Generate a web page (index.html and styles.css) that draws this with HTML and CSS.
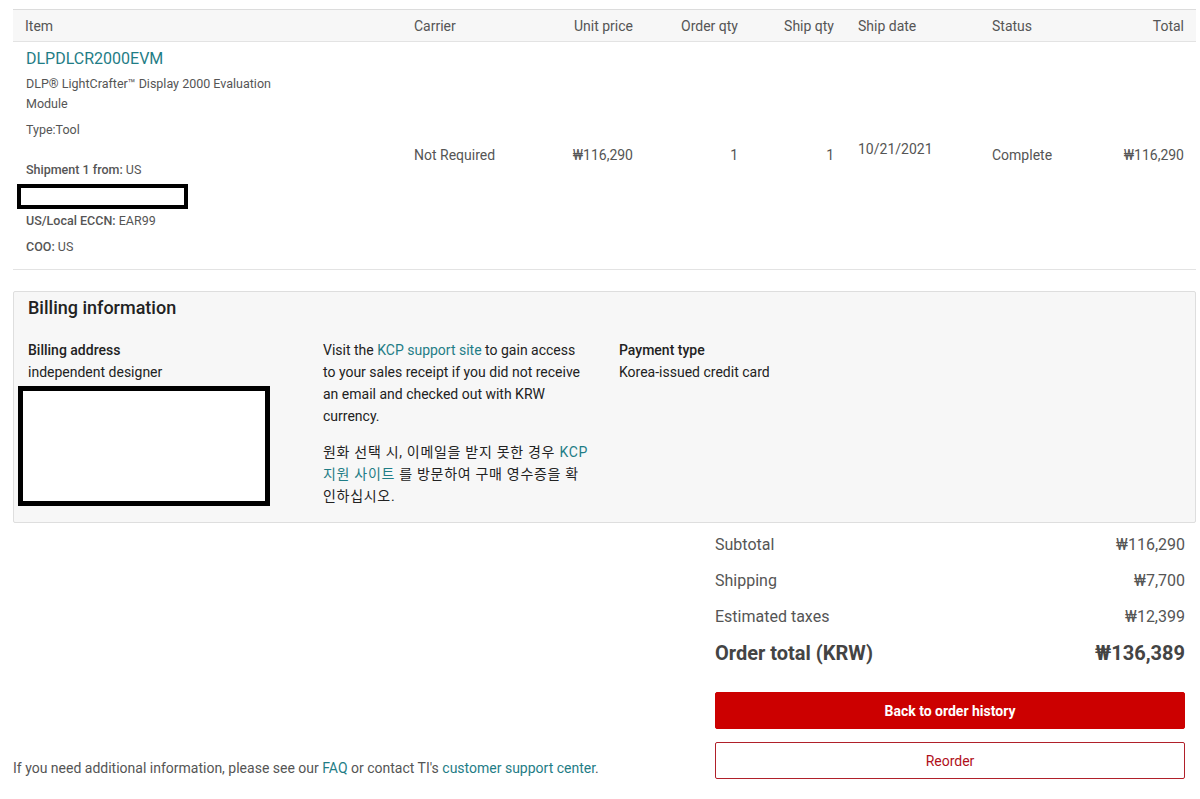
FILE: index.html
```html
<!DOCTYPE html>
<html>
<head>
<meta charset="utf-8">
<link rel="stylesheet" href="styles.css">
</head>
<body>
<div class="page">
  <table class="items">
    <colgroup>
      <col class="c-item"><col class="c-carrier"><col class="c-price"><col class="c-oqty"><col class="c-sqty"><col class="c-date"><col class="c-status"><col class="c-total">
    </colgroup>
    <thead>
      <tr>
        <th>Item</th>
        <th>Carrier</th>
        <th class="r">Unit price</th>
        <th class="r">Order qty</th>
        <th class="r">Ship qty</th>
        <th>Ship date</th>
        <th>Status</th>
        <th class="r">Total</th>
      </tr>
    </thead>
    <tbody>
      <tr>
        <td class="item">
          <a class="part link">DLPDLCR2000EVM</a>
          <div class="desc">DLP® LightCrafter™ Display 2000 Evaluation Module</div>
          <div class="type">Type:Tool</div>
          <div class="ship"><b>Shipment 1 from:</b> US</div>
          <div class="redact-small"></div>
          <div class="eccn"><b>US/Local ECCN:</b> EAR99</div>
          <div class="coo"><b>COO:</b> US</div>
        </td>
        <td>Not Required</td>
        <td class="r">₩116,290</td>
        <td class="r">1</td>
        <td class="r">1</td>
        <td class="date">10/21/2021</td>
        <td>Complete</td>
        <td class="r">₩116,290</td>
      </tr>
    </tbody>
  </table>

  <section class="billing">
    <h2>Billing information</h2>
    <div class="bill-cols">
      <div class="bill-col">
        <div class="label">Billing address</div>
        <div>independent designer</div>
        <div class="redact-big"></div>
      </div>
      <div class="bill-col mid">
        <p>Visit the <a class="link">KCP support site</a> to gain access to your sales receipt if you did not receive an email and checked out with KRW currency.</p>
        <p class="ko">원화 선택 시, 이메일을 받지 못한 경우 <a class="link">KCP 지원 사이트</a> 를 방문하여 구매 영수증을 확인하십시오.</p>
      </div>
      <div class="bill-col">
        <div class="label">Payment type</div>
        <div>Korea-issued credit card</div>
      </div>
    </div>
  </section>

  <div class="bottom">
    <p class="help">If you need additional information, please see our <a class="link">FAQ</a> or contact TI's <a class="link">customer support center</a>.</p>
    <div class="summary">
      <div class="sum-row"><span>Subtotal</span><span>₩116,290</span></div>
      <div class="sum-row"><span>Shipping</span><span>₩7,700</span></div>
      <div class="sum-row"><span>Estimated taxes</span><span>₩12,399</span></div>
      <div class="sum-row total"><span>Order total (KRW)</span><span>₩136,389</span></div>
      <button class="btn primary">Back to order history</button>
      <button class="btn secondary">Reorder</button>
    </div>
  </div>
</div>
</body>
</html>
```

FILE: styles.css
```css
* { box-sizing: border-box; }
html, body { margin: 0; background: #fff; }
body {
  font-family: Roboto, "Noto Sans CJK KR", "Liberation Sans", sans-serif;
  color: #555;
  font-size: 14px;
}
.page {
  padding: 9px 4px 0 13px;
  width: 1200px;
}
.link { color: #1f7d86; text-decoration: none; }

.items {
  width: 1183px;
  table-layout: fixed;
  border-collapse: collapse;
}
.c-item { width: 389px; }
.c-carrier { width: 143px; }
.c-price { width: 100px; }
.c-oqty { width: 105px; }
.c-sqty { width: 96px; }
.c-date { width: 134px; }
.c-status { width: 110px; }
.c-total { width: 106px; }

.items th {
  background: #f7f7f7;
  border-top: 1px solid #dcdcdc;
  border-bottom: 1px solid #e3e3e3;
  font-weight: 400;
  font-size: 14px;
  color: #555;
  text-align: left;
  height: 32px;
  padding: 0 12px;
}
.items .r { text-align: right; }
.items td {
  padding: 0 12px 2px;
  vertical-align: middle;
  font-size: 14px;
  line-height: 20px;
  border-bottom: 1px solid #e3e3e3;
}
.items td.date { padding-bottom: 14px; }
.items td.item {
  padding: 6px 12px 12px 13px;
  font-size: 12.5px;
  line-height: 20px;
}
.part { display: block; font-size: 16px; line-height: 22px; }
.desc { margin-top: 4px; width: 270px; }
.type { margin-top: 6px; }
.ship { margin-top: 20px; }
.item b { font-weight: 500; }
.redact-small {
  margin: 4px 0 2px -9px;
  width: 171px;
  height: 25px;
  border: 4px solid #000;
  background: #fff;
}
.coo { margin-top: 6px; }

.billing {
  margin-top: 21px;
  width: 1183px;
  background: #f7f7f7;
  border: 1px solid #dedede;
  border-radius: 2px;
  padding: 4px 14px 15px 14px;
  color: #222;
}
.billing h2 {
  margin: 0;
  font-size: 18px;
  line-height: 24px;
  font-weight: 500;
  color: #222;
}
.bill-cols {
  margin-top: 19px;
  display: grid;
  grid-template-columns: 295px 296px 1fr;
  font-size: 14px;
  line-height: 22px;
}
.bill-col { padding-right: 25px; }
.bill-col.mid { padding-right: 30px; }
.bill-col p { margin: 0; }
.bill-col p.ko { margin-top: 14px; letter-spacing: 0.7px; }
.label { font-weight: 500; }
.redact-big {
  margin: 3px 0 0 -10px;
  width: 252px;
  height: 120px;
  border: 5px solid #000;
  background: #fff;
}

.bottom {
  display: flex;
  justify-content: space-between;
  align-items: flex-end;
  width: 1183px;
}
.help {
  margin: 0 0 1px 0;
  font-size: 14px;
  line-height: 20px;
  color: #555;
}
.summary {
  width: 470px;
  margin: 4px 11px 0 0;
  display: flex;
  flex-direction: column;
}
.sum-row {
  display: flex;
  justify-content: space-between;
  font-size: 16px;
  line-height: 36px;
  color: #555;
}
.sum-row.total {
  font-size: 20px;
  font-weight: 700;
  color: #444;
}
.btn {
  font-family: Roboto, "Liberation Sans", sans-serif;
  font-size: 14px;
  height: 37px;
  width: 100%;
  border-radius: 2px;
  cursor: pointer;
}
.btn.primary {
  margin-top: 21px;
  background: #cc0000;
  border: 1px solid #cc0000;
  color: #fff;
  font-weight: 700;
}
.btn.secondary {
  margin-top: 13px;
  background: #fff;
  border: 1px solid #b0202a;
  color: #b0101a;
}
```
